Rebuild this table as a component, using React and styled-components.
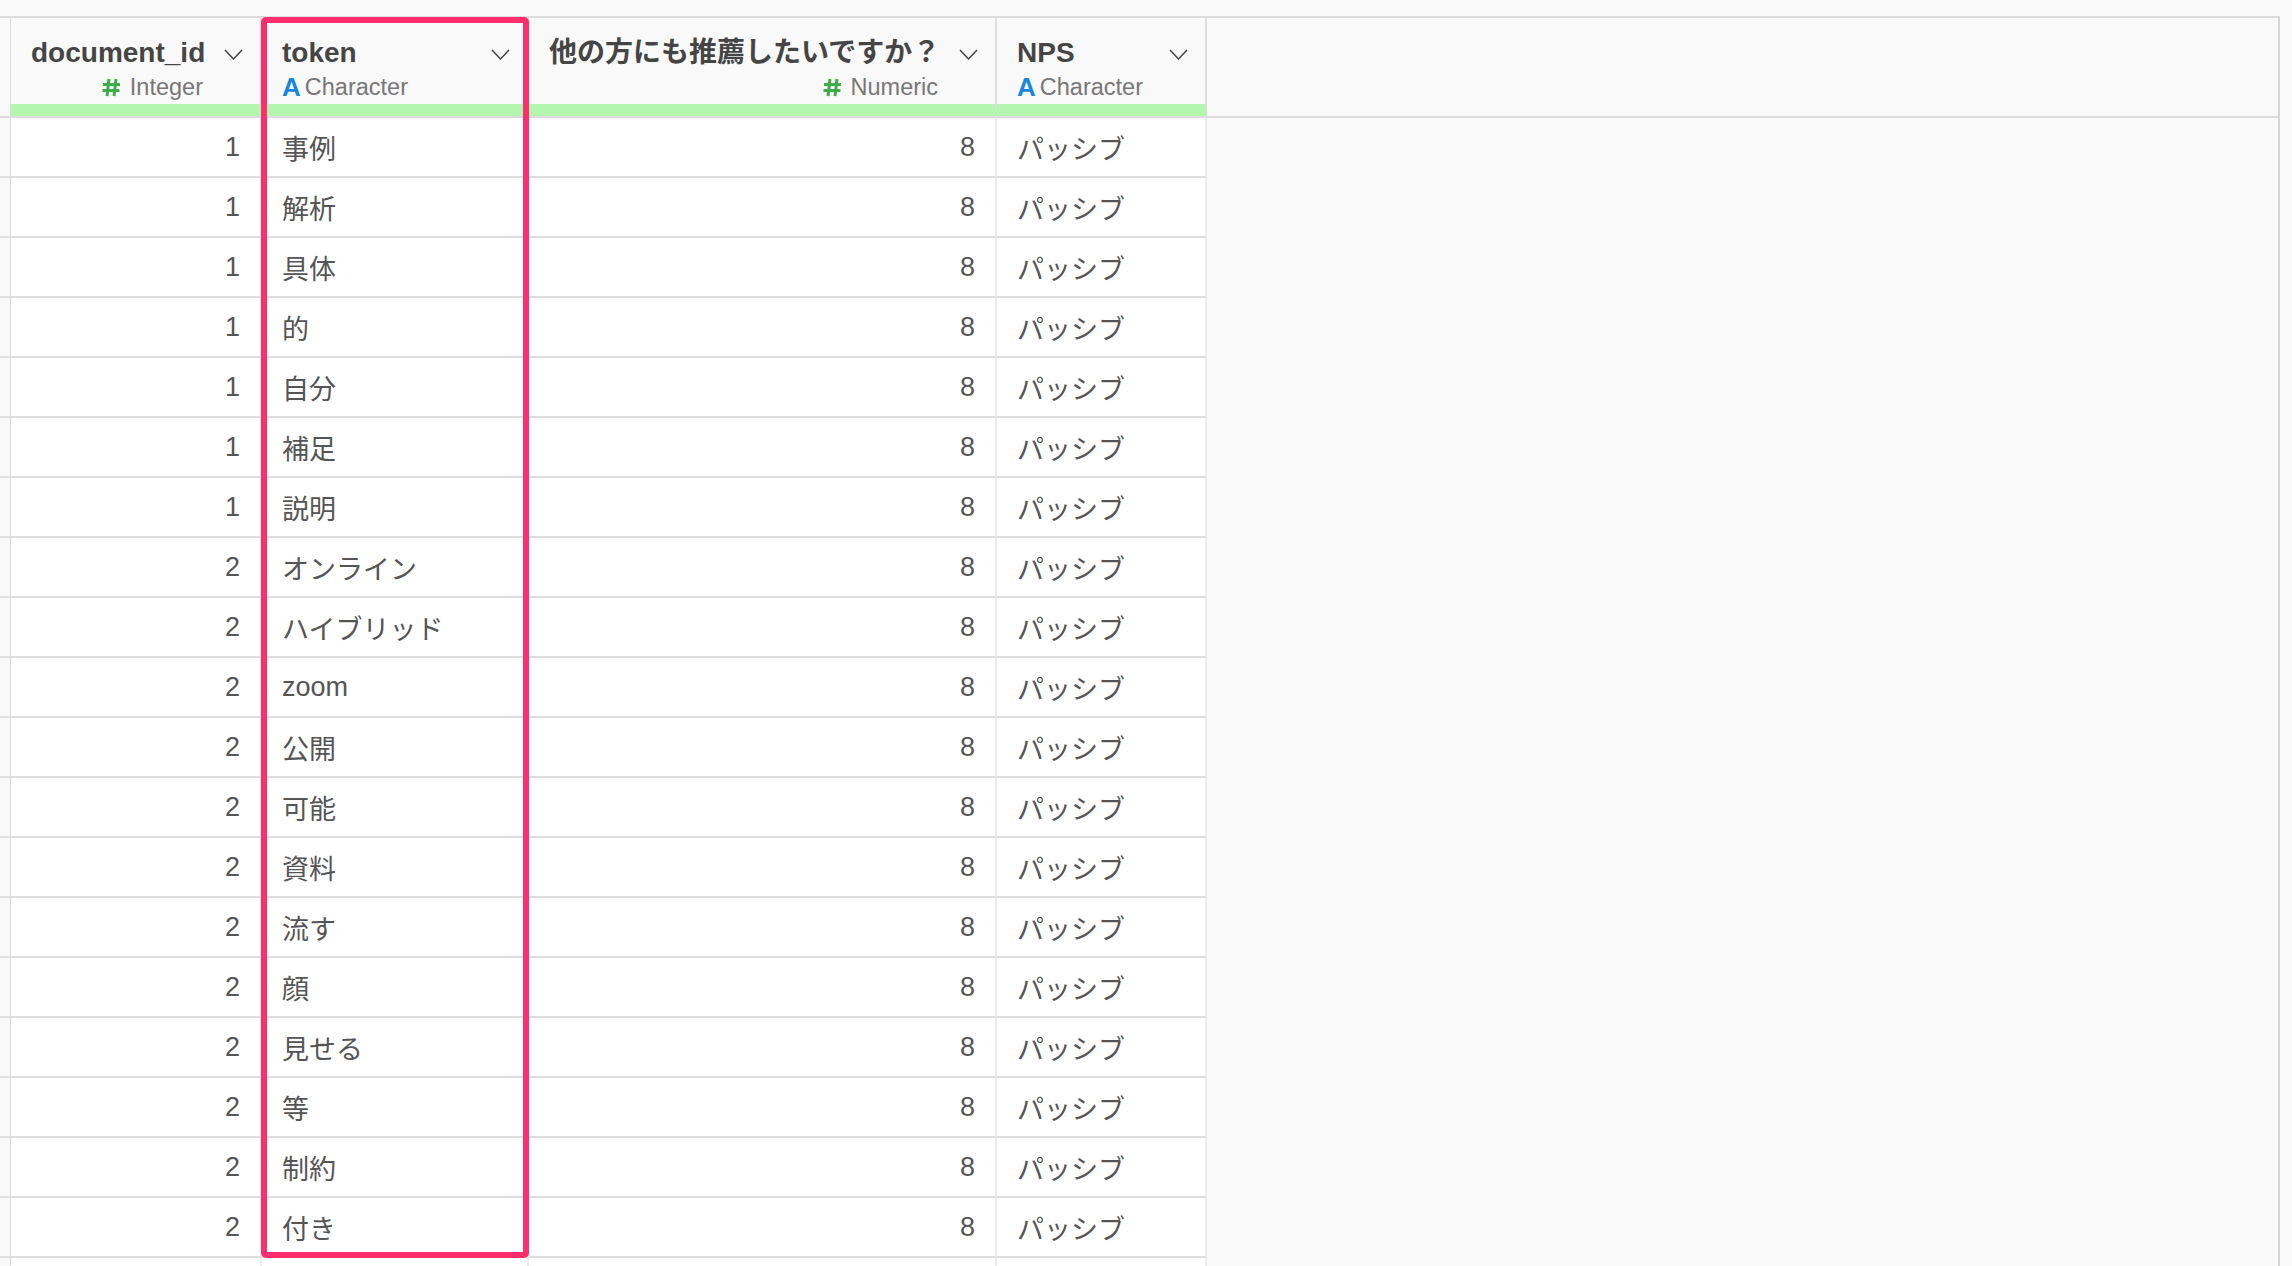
import styled, { createGlobalStyle } from 'styled-components';

const GlobalStyle = createGlobalStyle`
	html, body {
		margin: 0;
		height: 100%;
		overflow: hidden;
		background: #f9f9f9;
	}
	body {
		font-family: 'Liberation Sans', 'Noto Sans CJK JP', sans-serif;
	}
`;

const Page = styled.div`
	padding-top: 16px;
`;

const Table = styled.div`
	position: relative;
	width: 2280px;
	box-sizing: border-box;
	border-top: 2px solid #dcdcdc;
	border-right: 2px solid #d6d6d6;
	display: flex;
	flex-direction: column;
`;

const HeaderRow = styled.div`
	display: flex;
	background: #f9f9f9;
	border-bottom: 2px solid #dcdcdc;
`;

const Row = styled.div`
	display: flex;
`;

const Gutter = styled.div`
	width: 11px;
	flex: none;
	box-sizing: border-box;
	background: #f9f9f9;
	border-right: 1px solid #dcdcdc;
	height: ${(props) => (props.header ? '98px' : '60px')};
	border-bottom: ${(props) => (props.header ? 'none' : '2px solid #dedede')};
`;

const Filler = styled.div`
	flex: 1;
	height: ${(props) => (props.header ? '98px' : '60px')};
	background: ${(props) => (props.header ? '#f9f9f9' : '#fafafa')};
`;

const HeaderCell = styled.div`
	width: ${(props) => props.width}px;
	flex: none;
	box-sizing: border-box;
	height: 98px;
	padding: 19px 17px 0 20px;
	border-right: 2px solid #dedede;
	border-bottom: 12px solid #b4f5b0;
	display: flex;
	align-items: flex-start;
	gap: 21px;
`;

const Info = styled.div`
	flex: 1;
	min-width: 0;
	display: flex;
	flex-direction: column;
`;

const Title = styled.div`
	font-size: 28px;
	line-height: 32px;
	font-weight: bold;
	color: #454545;
	white-space: nowrap;
`;

const TypeLine = styled.div`
	margin-top: 4px;
	display: flex;
	align-items: center;
	justify-content: ${(props) => (props.numeric ? 'flex-end' : 'flex-start')};
	font-size: 23.5px;
	line-height: 28px;
	color: #777;
	white-space: nowrap;
`;

const CharIcon = styled.span`
	font-size: 26px;
	font-weight: bold;
	color: #1787d9;
	margin-right: 4px;
	line-height: 28px;
`;

const Cell = styled.div`
	width: ${(props) => props.width}px;
	flex: none;
	box-sizing: border-box;
	height: 60px;
	display: flex;
	align-items: center;
	justify-content: ${(props) => (props.numeric ? 'flex-end' : 'flex-start')};
	padding: ${(props) => (props.numeric ? '0 20px 0 0' : '0 0 0 20px')};
	background: #fff;
	border-right: 2px solid #ebebeb;
	border-bottom: 2px solid #dedede;
	font-size: 27px;
	color: #555;
	white-space: nowrap;
`;

const Highlight = styled.div`
	position: absolute;
	left: 261px;
	top: -1px;
	width: 268px;
	height: 1241px;
	box-sizing: border-box;
	border: 6px solid #fe2d6d;
	border-radius: 5px;
	pointer-events: none;
`;

const Chevron = () => (
	<svg width="19" height="11" viewBox="0 0 19 11" style={{ flex: 'none', marginTop: '12px' }}>
		<polyline points="1,1 9.5,10 18,1" fill="none" stroke="#444" strokeWidth="1.5" />
	</svg>
);

const HashIcon = () => (
	<svg width="19" height="19" viewBox="0 0 19 19" style={{ marginRight: '9px' }}>
		<g stroke="#3fab4a" strokeWidth="3" fill="none">
			<line x1="7" y1="1" x2="5" y2="18" />
			<line x1="14" y1="1" x2="12" y2="18" />
			<line x1="1" y1="6.5" x2="18" y2="6.5" />
			<line x1="0.5" y1="12.5" x2="17.5" y2="12.5" />
		</g>
	</svg>
);

const columns = [
	{ key: 'id', title: 'document_id', type: 'Integer', numeric: true, width: 251 },
	{ key: 'token', title: 'token', type: 'Character', numeric: false, width: 267 },
	{ key: 'score', title: '他の方にも推薦したいですか？', type: 'Numeric', numeric: true, width: 468 },
	{ key: 'nps', title: 'NPS', type: 'Character', numeric: false, width: 210 },
];

const tokens = [
	[1, '事例'], [1, '解析'], [1, '具体'], [1, '的'], [1, '自分'], [1, '補足'], [1, '説明'],
	[2, 'オンライン'], [2, 'ハイブリッド'], [2, 'zoom'], [2, '公開'], [2, '可能'], [2, '資料'],
	[2, '流す'], [2, '顔'], [2, '見せる'], [2, '等'], [2, '制約'], [2, '付き'],
];

const rows = tokens.map(([id, token]) => ({ id, token, score: 8, nps: 'パッシブ' }));
// next row only peeks in under the window edge
rows.push({ id: '', token: '', score: '', nps: '' });

export default function App() {
	return (
		<>
			<GlobalStyle />
			<Page>
				<Table>
					<HeaderRow>
						<Gutter header />
						{columns.map((col) => (
							<HeaderCell key={col.key} width={col.width}>
								<Info>
									<Title>{col.title}</Title>
									<TypeLine numeric={col.numeric}>
										{col.numeric ? <HashIcon /> : <CharIcon>A</CharIcon>}
										{col.type}
									</TypeLine>
								</Info>
								<Chevron />
							</HeaderCell>
						))}
						<Filler header />
					</HeaderRow>
					{rows.map((row, i) => (
						<Row key={i}>
							<Gutter />
							{columns.map((col) => (
								<Cell key={col.key} width={col.width} numeric={col.numeric}>
									{row[col.key]}
								</Cell>
							))}
							<Filler />
						</Row>
					))}
					<Highlight />
				</Table>
			</Page>
		</>
	);
}
